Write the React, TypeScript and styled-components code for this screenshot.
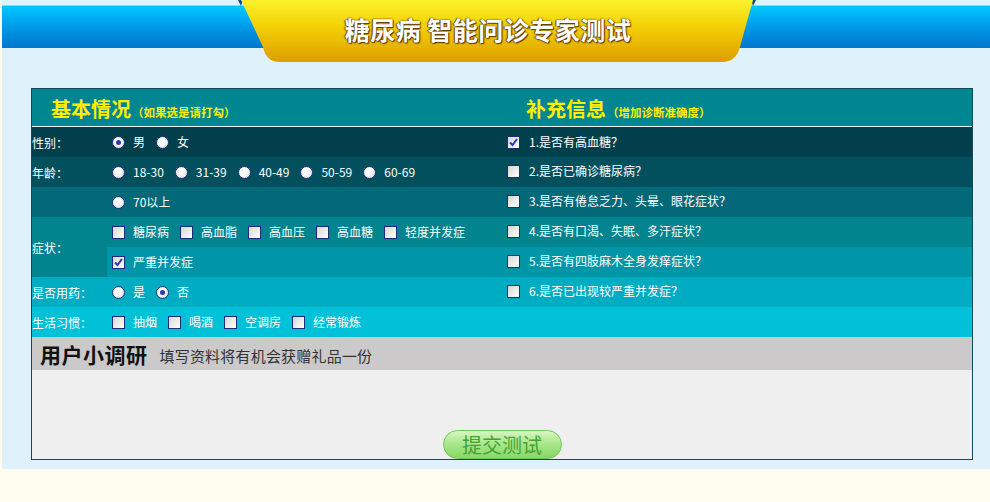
import React from "react";
import styled, { createGlobalStyle } from "styled-components";

const GlobalStyle = createGlobalStyle`
    html, body {
        margin: 0;
        padding: 0;
        background: #fffdee;
    }
    body {
        font-family: "Noto Sans CJK SC", "Noto Sans", sans-serif;
    }
`;

const Page = styled.div`
    margin-left: 2px;
    width: 988px;
    background: #dff2fc;
    padding-bottom: 9px;
`;

const Banner = styled.div`
    position: relative;
    height: 62px;
    padding-top: 5px;
    box-sizing: border-box;
`;

const BlueBar = styled.div`
    height: 43px;
    box-sizing: border-box;
    border-top: 1px solid #72e2ff;
    background: linear-gradient(#00c8ff, #0096e6 55%, #0076cc);
`;

const Ribbon = styled.div`
    position: absolute;
    left: 234px;
    top: 0;
    width: 522px;
    height: 62px;
    display: flex;
    justify-content: center;
    padding: 14px 18px 0 0;
    box-sizing: border-box;

    svg {
        position: absolute;
        left: 0;
        top: 0;
    }
`;

const Title = styled.h1`
    position: relative;
    margin: 0;
    font-size: 25px;
    line-height: 30px;
    font-weight: 700;
    letter-spacing: 0.5px;
    color: #fff;
    white-space: pre;
    text-shadow: 0 0 2px #6b3d00, 1px 1px 1px #5a3300, -1px 0 1px #7a4a00;
`;

const Board = styled.div`
    margin: 26px 0 0 29px;
    width: 940px;
    border: 1px solid #0b4c58;
`;

const Head = styled.div`
    display: flex;
    height: 37px;
    background: #008690;
    border-bottom: 1px solid #e6f6f6;
`;

const HeadCell = styled.div<{ $pad: number; $width?: number }>`
    display: flex;
    align-items: baseline;
    width: ${p => p.$width ? `${p.$width}px` : "auto"};
    flex: ${p => p.$width ? "none" : 1};
    padding: 8px 0 0 ${p => p.$pad}px;
    box-sizing: border-box;
    color: #ffee00;
    font-weight: 700;
`;

const HeadTitle = styled.span`
    font-size: 20px;
    line-height: 24px;
`;

const HeadNote = styled.span`
    font-size: 11.5px;
    margin-left: 1px;
`;

const Table = styled.table`
    width: 100%;
    border-collapse: collapse;
    table-layout: fixed;
`;

const Row = styled.tr<{ $bg: string }>`
    background: ${p => p.$bg};
`;

const Cell = styled.td<{ $pad?: number; $bg?: string }>`
    height: 30px;
    padding: 0 0 0 ${p => p.$pad ?? 0}px;
    color: #fff;
    font-size: 12px;
    vertical-align: middle;
    white-space: nowrap;
    background: ${p => p.$bg ?? "transparent"};
`;

const Options = styled.div`
    display: flex;
    align-items: center;
`;

const Option = styled.label<{ $gap?: number }>`
    display: inline-flex;
    align-items: center;
    margin-right: ${p => p.$gap ?? 11}px;
    line-height: 14px;
`;

const Mark = styled.span<{ $round?: boolean; $space?: number }>`
    display: inline-flex;
    align-items: center;
    justify-content: center;
    width: 13px;
    height: 13px;
    box-sizing: border-box;
    margin-right: ${p => p.$space ?? 8}px;
    border: 1px solid #1d2c7c;
    border-radius: ${p => p.$round ? "50%" : "0"};
    background: ${p => p.$round
        ? "radial-gradient(circle at 35% 35%, #ffffff 30%, #d9d9e2 100%)"
        : "linear-gradient(135deg, #d6d6d0, #ffffff)"};
`;

const Dot = styled.span`
    width: 5px;
    height: 5px;
    border-radius: 50%;
    background: #2a3aa6;
`;

const SurveyHead = styled.div`
    display: flex;
    align-items: center;
    height: 33px;
    padding-left: 8px;
    background: #cbc9c9;
`;

const SurveyTitle = styled.span`
    font-size: 21px;
    font-weight: 700;
    letter-spacing: 0.5px;
    color: #111;
`;

const SurveyNote = styled.span`
    margin-left: 12px;
    font-size: 15px;
    letter-spacing: 0.2px;
    color: #333;
    padding-top: 3px;
`;

const SurveyBody = styled.div`
    display: flex;
    justify-content: center;
    align-items: flex-end;
    height: 89px;
    background: #efefef;
`;

const Submit = styled.button`
    width: 119px;
    height: 29px;
    padding: 0;
    border: 1px solid #72c45e;
    border-radius: 15px;
    background: linear-gradient(#d6f6c0, #a6e688 50%, #86d866);
    color: #47a235;
    font-family: "Noto Sans CJK SC", sans-serif;
    font-size: 20px;
    line-height: 26px;
    cursor: pointer;
`;

function Check({ checked, round, space }: { checked?: boolean, round?: boolean, space?: number }) {
    return (
        <Mark $round={round} $space={space}>
            {checked && round && <Dot />}
            {checked && !round && (
                <svg width="11" height="11" viewBox="0 0 11 11">
                    <polyline points="2,5.5 4.5,8 9,2" fill="none" stroke="#2434c4" strokeWidth="2" />
                </svg>
            )}
        </Mark>
    );
}

interface Choice {
    text: string,
    checked?: boolean,
}

function Choices({ items, round }: { items: Choice[], round?: boolean }) {
    return (
        <Options>
            {items.map(item => (
                <Option key={item.text}>
                    <Check round={round} checked={item.checked} />
                    {item.text}
                </Option>
            ))}
        </Options>
    );
}

function Question({ text, checked }: { text: string, checked?: boolean }) {
    return (
        <Option>
            <Check checked={checked} space={9} />
            {text}
        </Option>
    );
}

const rowColors = ["#023f4d", "#02505e", "#036878", "#02848f", "#0096a7", "#00acc2", "#00c1d8"];

export default function App() {
    return (
        <>
            <GlobalStyle />
            <Page>
                <Banner>
                    <BlueBar />
                    <Ribbon>
                        <svg width="522" height="62" viewBox="0 0 522 62">
                            <defs>
                                <linearGradient id="ribbon" x1="0" y1="0" x2="0" y2="1">
                                    <stop offset="0" stopColor="#fdf22c" />
                                    <stop offset="0.45" stopColor="#f2cf04" />
                                    <stop offset="1" stopColor="#dd9c00" />
                                </linearGradient>
                            </defs>
                            <path d="M2 0 L5 6 L7 0 Z" fill="#0b4c9a" />
                            <path d="M520 0 L517 6 L515 0 Z" fill="#0b4c9a" />
                            <path d="M5 0 L517 0 L504 47 Q500 62 486 62 L44 62 Q30 62 27 47 Z" fill="url(#ribbon)" />
                        </svg>
                        <Title>糖尿病 智能问诊专家测试</Title>
                    </Ribbon>
                </Banner>

                <Board>
                    <Head>
                        <HeadCell $pad={19} $width={469}>
                            <HeadTitle>基本情况</HeadTitle>
                            <HeadNote>（如果选是请打勾）</HeadNote>
                        </HeadCell>
                        <HeadCell $pad={25}>
                            <HeadTitle>补充信息</HeadTitle>
                            <HeadNote>（增加诊断准确度）</HeadNote>
                        </HeadCell>
                    </Head>

                    <Table>
                        <colgroup>
                            <col style={{ width: 75 }} />
                            <col style={{ width: 394 }} />
                            <col />
                        </colgroup>
                        <tbody>
                            <Row $bg={rowColors[0]}>
                                <Cell>性别：</Cell>
                                <Cell $pad={5}>
                                    <Choices round items={[{ text: "男", checked: true }, { text: "女" }]} />
                                </Cell>
                                <Cell $pad={6}><Question checked text="1.是否有高血糖？" /></Cell>
                            </Row>
                            <Row $bg={rowColors[1]}>
                                <Cell>年龄：</Cell>
                                <Cell $pad={5}>
                                    <Choices round items={[
                                        { text: "18-30" }, { text: "31-39" }, { text: "40-49" },
                                        { text: "50-59" }, { text: "60-69" },
                                    ]} />
                                </Cell>
                                <Cell $pad={6}><Question text="2.是否已确诊糖尿病？" /></Cell>
                            </Row>
                            <Row $bg={rowColors[2]}>
                                <Cell></Cell>
                                <Cell $pad={5}>
                                    <Choices round items={[{ text: "70以上" }]} />
                                </Cell>
                                <Cell $pad={6}><Question text="3.是否有倦怠乏力、头晕、眼花症状？" /></Cell>
                            </Row>
                            <Row $bg={rowColors[3]}>
                                <Cell rowSpan={2} $bg={rowColors[3]}>症状：</Cell>
                                <Cell $pad={5}>
                                    <Choices items={[
                                        { text: "糖尿病" }, { text: "高血脂" }, { text: "高血压" },
                                        { text: "高血糖" }, { text: "轻度并发症" },
                                    ]} />
                                </Cell>
                                <Cell $pad={6}><Question text="4.是否有口渴、失眠、多汗症状？" /></Cell>
                            </Row>
                            <Row $bg={rowColors[4]}>
                                <Cell $pad={5}>
                                    <Choices items={[{ text: "严重并发症", checked: true }]} />
                                </Cell>
                                <Cell $pad={6}><Question text="5.是否有四肢麻木全身发痒症状？" /></Cell>
                            </Row>
                            <Row $bg={rowColors[5]}>
                                <Cell>是否用药：</Cell>
                                <Cell $pad={5}>
                                    <Choices round items={[{ text: "是" }, { text: "否", checked: true }]} />
                                </Cell>
                                <Cell $pad={6}><Question text="6.是否已出现较严重并发症？" /></Cell>
                            </Row>
                            <Row $bg={rowColors[6]}>
                                <Cell>生活习惯：</Cell>
                                <Cell $pad={5}>
                                    <Choices items={[
                                        { text: "抽烟" }, { text: "喝酒" }, { text: "空调房" }, { text: "经常锻炼" },
                                    ]} />
                                </Cell>
                                <Cell></Cell>
                            </Row>
                        </tbody>
                    </Table>

                    <SurveyHead>
                        <SurveyTitle>用户小调研</SurveyTitle>
                        <SurveyNote>填写资料将有机会获赠礼品一份</SurveyNote>
                    </SurveyHead>
                    <SurveyBody>
                        <Submit type="button">提交测试</Submit>
                    </SurveyBody>
                </Board>
            </Page>
        </>
    );
}
